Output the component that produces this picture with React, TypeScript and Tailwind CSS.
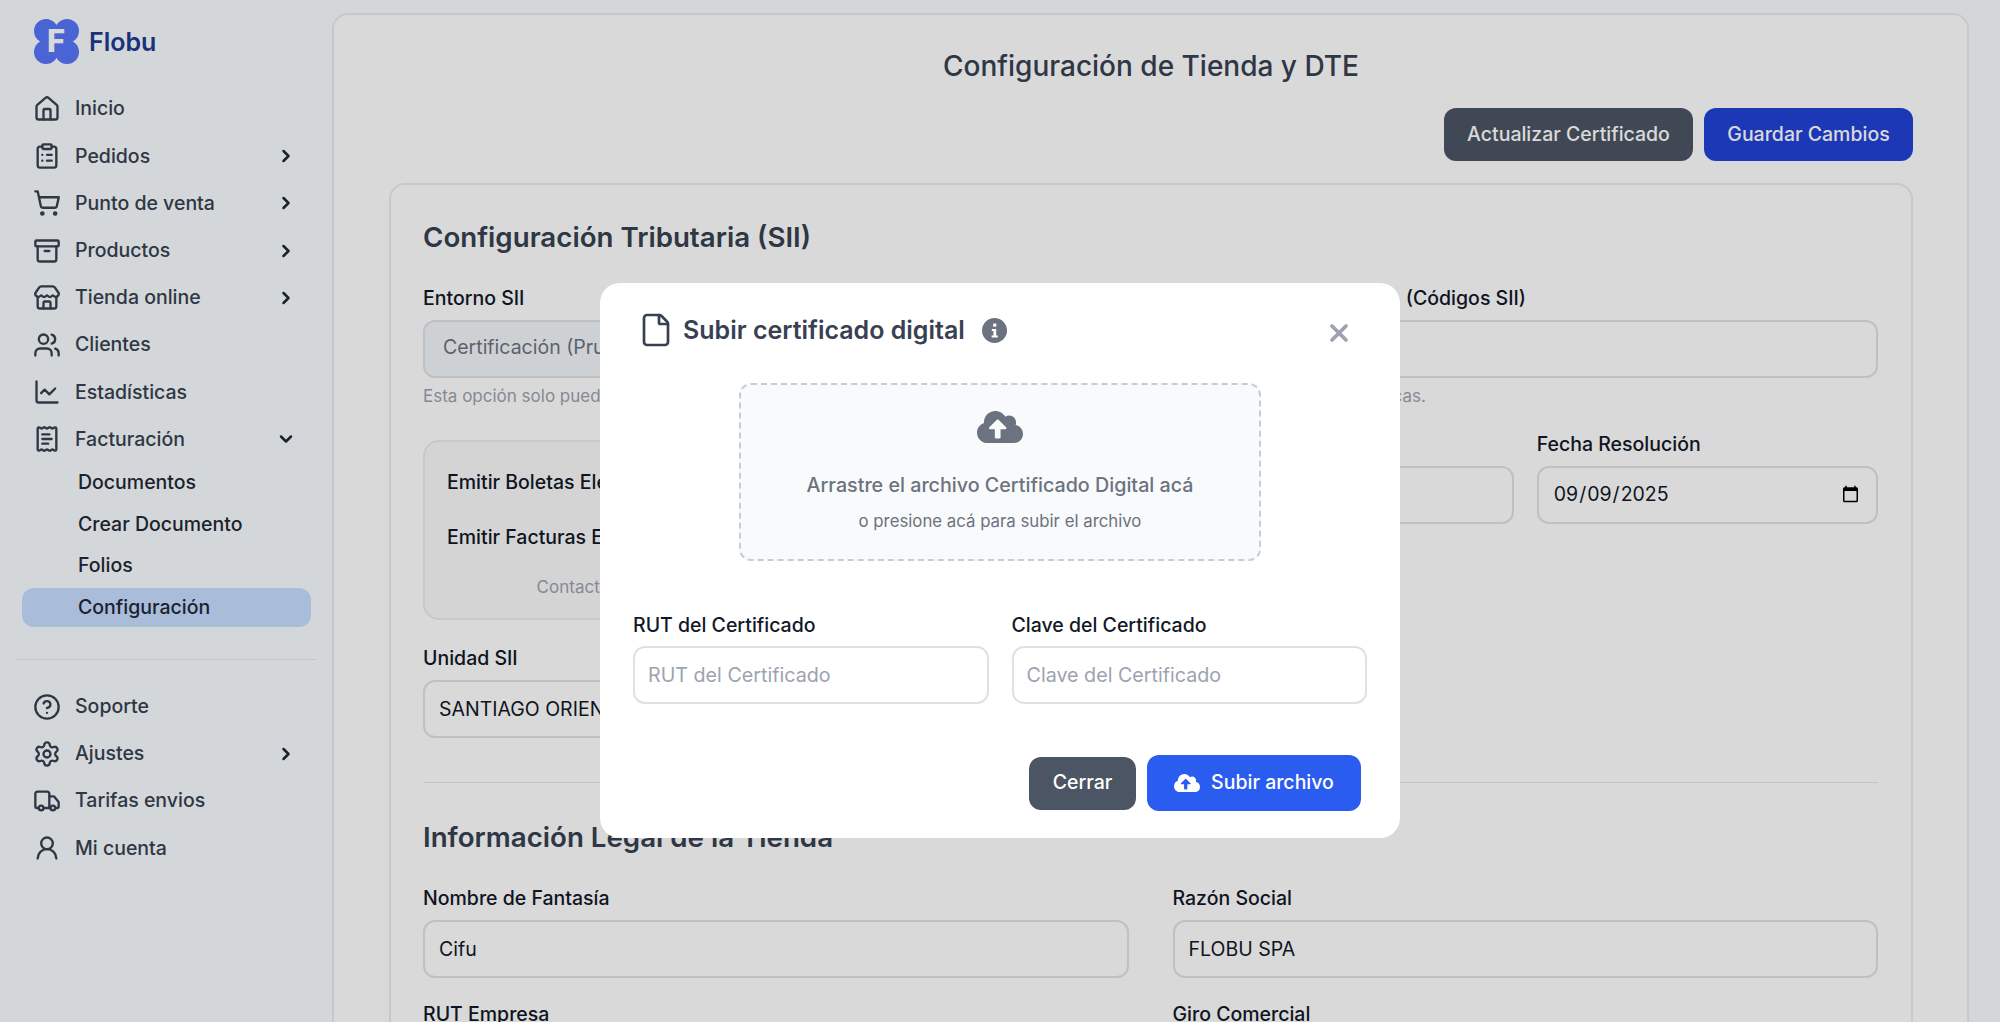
import type { ReactNode } from 'react'
import {
  Archive,
  ChartLine,
  ChevronDown,
  ChevronRight,
  CircleHelp,
  ClipboardList,
  File,
  House,
  ReceiptText,
  Settings,
  ShoppingCart,
  Store,
  Truck,
  UserRound,
  Users,
  X,
} from 'lucide-react'
import { FaCloudUploadAlt } from 'react-icons/fa'

const topNav = [
  { name: 'Inicio', icon: House },
  { name: 'Pedidos', icon: ClipboardList, arrow: true },
  { name: 'Punto de venta', icon: ShoppingCart, arrow: true },
  { name: 'Productos', icon: Archive, arrow: true },
  { name: 'Tienda online', icon: Store, arrow: true },
  { name: 'Clientes', icon: Users },
  { name: 'Estadísticas', icon: ChartLine },
]

const bottomNav = [
  { name: 'Soporte', icon: CircleHelp },
  { name: 'Ajustes', icon: Settings, arrow: true },
  { name: 'Tarifas envios', icon: Truck },
  { name: 'Mi cuenta', icon: UserRound },
]

const billingNav = ['Documentos', 'Crear Documento', 'Folios', 'Configuración']

function Logo() {
  return (
    <svg viewBox="0 0 45 45" className="h-[45px] w-[45px]">
      <g fill="#5775fb">
        <circle cx="12" cy="12" r="12" />
        <circle cx="33" cy="12" r="12" />
        <circle cx="12" cy="33" r="12" />
        <circle cx="33" cy="33" r="12" />
        <rect x="7" y="7" width="31" height="31" />
      </g>
      <text x="22" y="33" textAnchor="middle" fill="#ffffff" fontSize="31" fontWeight="800" fontFamily="Inter, sans-serif">
        F
      </text>
    </svg>
  )
}

function NavRow({ item }: { item: { name: string; icon: typeof House; arrow?: boolean } }) {
  return (
    <div className="flex h-[47.2px] items-center pl-[33px] pr-[36px] text-[#374151]">
      <item.icon className="h-[28px] w-[28px] shrink-0" strokeWidth={2} />
      <span className="ml-[14px] flex-1 text-[19.5px] font-medium">{item.name}</span>
      {item.arrow && <ChevronRight className="h-[20px] w-[20px] text-[#1f2937]" strokeWidth={3} />}
    </div>
  )
}

function Sidebar() {
  return (
    <aside className="w-[332px] shrink-0">
      <div className="flex items-center gap-[10px] pl-[34px] pt-[19px] pb-[21.5px]">
        <Logo />
        <span className="pt-[2px] text-[25px] font-semibold text-[#1f3a93]">Flobu</span>
      </div>
      {topNav.map((item) => (
        <NavRow key={item.name} item={item} />
      ))}
      <div className="flex h-[47.2px] items-center pl-[33px] pr-[36px] text-[#374151]">
        <ReceiptText className="h-[28px] w-[28px] shrink-0" strokeWidth={2} />
        <span className="ml-[14px] flex-1 text-[19.5px] font-medium">Facturación</span>
        <ChevronDown className="h-[20px] w-[20px] text-[#1f2937]" strokeWidth={3} />
      </div>
      <div className="flex flex-col gap-[2.6px] pl-[22px] pr-[21px] pt-[0.3px]">
        {billingNav.map((name) => (
          <div
            key={name}
            className={
              name === 'Configuración'
                ? 'flex h-[39px] items-center rounded-xl bg-[#c7ddff] pl-[56px] text-[19.5px] font-medium text-[#1f2937]'
                : 'flex h-[39px] items-center pl-[56px] text-[19.5px] font-medium text-[#1f2937]'
            }
          >
            {name}
          </div>
        ))}
      </div>
      <div className="mx-[16px] mb-[23px] mt-[32px] h-px bg-[#e5e7eb]" />
      {bottomNav.map((item) => (
        <NavRow key={item.name} item={item} />
      ))}
    </aside>
  )
}

function Field({
  label,
  value,
  muted,
  className,
}: {
  label: ReactNode
  value?: string
  muted?: boolean
  className?: string
}) {
  return (
    <div className={className}>
      <label className="block h-[28px] text-[19.5px] font-medium leading-[28px] text-[#111827]">{label}</label>
      <input
        readOnly
        defaultValue={value}
        className={
          muted
            ? 'mt-[8px] h-[58px] w-full rounded-xl border-2 border-[#e0e2e6] bg-[#f3f6f9] px-[18px] pb-[5px] text-[19.5px] text-[#6b7280] outline-none'
            : 'mt-[8px] h-[58px] w-full rounded-xl border-2 border-[#e0e2e6] px-[14px] text-[19.5px] text-[#111827] outline-none'
        }
      />
    </div>
  )
}

function MainPanel() {
  return (
    <main className="mt-[13px] mb-[-200px] mr-[31px] flex-1 rounded-2xl border-2 border-[#eaecef] bg-white pl-[55px] pr-[54px] pt-[33px]">
      <h1 className="text-center text-[28px] font-medium leading-[36px] text-[#374151]">
        Configuración de Tienda y DTE
      </h1>
      <div className="mt-[24px] flex justify-end gap-[11px]">
        <button className="h-[53px] w-[249px] rounded-xl bg-[#4b5563] text-[19.5px] font-medium text-white">
          Actualizar Certificado
        </button>
        <button className="h-[53px] w-[209px] rounded-xl bg-[#2242d8] text-[19.5px] font-medium text-white">
          Guardar Cambios
        </button>
      </div>
      <section className="mt-[22px] rounded-2xl border-2 border-[#eaecef] pl-[32px] pr-[33px] pt-[34px]">
        <h2 className="text-[27.7px] font-semibold leading-[36px] text-[#374151]">Configuración Tributaria (SII)</h2>
        <div className="mt-[29px] grid grid-cols-2 items-start gap-x-[44px]">
          <div>
            <Field label="Entorno SII" value="Certificación (Pruebas)" muted />
            <p className="mt-[6px] text-[17px] leading-[24px] text-[#9ca3af]">
              Esta opción solo puede ser cambiada por soporte.
            </p>
            <div className="mt-[32px] h-[180px] rounded-2xl border-2 border-[#eaecef] bg-[#f9fafb] px-[22px] pt-[26px]">
              <p className="text-[19.5px] font-medium leading-[28px] text-[#111827]">Emitir Boletas Electrónicas</p>
              <p className="mt-[27px] text-[19.5px] font-medium leading-[28px] text-[#111827]">Emitir Facturas Electrónicas</p>
              <p className="mt-[24px] text-center text-[17px] leading-[24px] text-[#9ca3af]">
                Contacta a soporte para habilitar la emisión de documentos
              </p>
            </div>
            <Field label="Unidad SII" value="SANTIAGO ORIENTE" className="mt-[24px]" />
          </div>
          <div>
            <Field
              label={
                <>
                  <span className="tracking-[-0.2px]">Actividades Económicas</span>{' '}
                  <span className="ml-[4px]">(Códigos SII)</span>
                </>
              }
            />
            <p className="mt-[6px] text-[17px] leading-[24px] text-[#9ca3af]">Busca actividades económicas.</p>
            <div className="mt-[22px] grid grid-cols-2 gap-x-[23px]">
              <Field label="Número Resolución" />
              <div>
                <label className="block h-[28px] text-[19.5px] font-medium leading-[28px] text-[#111827]">
                  Fecha Resolución
                </label>
                <input
                  type="date"
                  defaultValue="2025-09-09"
                  className="mt-[8px] h-[58px] w-full rounded-xl border-2 border-[#e0e2e6] px-[14px] text-[19.5px] text-[#111827] outline-none"
                />
              </div>
            </div>
          </div>
        </div>
        <div className="mt-[44px] h-px bg-[#e5e7eb]" />
        <h2 className="mt-[36px] text-[27.7px] font-semibold leading-[36px] text-[#374151]">
          Información Legal de la Tienda
        </h2>
        <div className="mt-[29px] grid grid-cols-2 gap-x-[44px] gap-y-[22px]">
          <Field label="Nombre de Fantasía" value="Cifu" />
          <Field label="Razón Social" value="FLOBU SPA" />
          <Field label="RUT Empresa" />
          <Field label="Giro Comercial" />
        </div>
      </section>
    </main>
  )
}

function InfoDot() {
  return (
    <svg viewBox="0 0 25 25" className="h-[25px] w-[25px]">
      <circle cx="12.5" cy="12.5" r="12.5" fill="#6b7280" />
      <rect x="11" y="5.5" width="3.4" height="3.2" rx="1" fill="#ffffff" />
      <path d="M9.8 11h4.4v6.4h1.6v2H9.6v-2h1.8V13H9.8z" fill="#ffffff" />
    </svg>
  )
}

function UploadModal() {
  return (
    <div className="absolute inset-0 flex items-start justify-center bg-black/15 pt-[283px]">
      <div className="h-[555px] w-[800px] rounded-[20px] bg-white px-[34px] pt-[31px]">
        <div className="flex h-[32px] items-center pl-[4px] pr-[13px]">
          <File className="h-[36px] w-[36px] shrink-0 text-[#374151]" strokeWidth={1.8} />
          <h3 className="ml-[9px] pt-[2px] text-[25px] font-semibold text-[#374151]">Subir certificado digital</h3>
          <span className="ml-[17px]">
            <InfoDot />
          </span>
          <X className="ml-auto mt-[6px] h-[28px] w-[28px] text-[#9ca3af]" strokeWidth={3.2} />
        </div>
        <div className="mx-auto mt-[37px] flex h-[178px] w-[522px] flex-col items-center rounded-xl border-2 border-dashed border-[#c9cdd3] bg-[#f9fafb] pt-[20px]">
          <FaCloudUploadAlt className="h-[44px] w-[46px] text-[#6b7280]" />
          <p className="mt-[22px] text-[19.7px] font-medium leading-[28px] text-[#6b7280]">
            Arrastre el archivo Certificado Digital acá
          </p>
          <p className="mt-[10px] text-[16.8px] leading-[24px] text-[#6b7280]">o presione acá para subir el archivo</p>
        </div>
        <div className="mx-[-1px] mt-[50px] grid grid-cols-2 gap-x-[23px]">
          <div>
            <label className="block h-[28px] text-[19.5px] font-medium leading-[28px] text-[#111827]">
              RUT del Certificado
            </label>
            <input
              placeholder="RUT del Certificado"
              className="mt-[7px] h-[58px] w-full rounded-xl border-2 border-[#dfe1e5] px-[13px] text-[19.7px] outline-none placeholder:text-[#9ca3af]"
            />
          </div>
          <div>
            <label className="block h-[28px] text-[19.5px] font-medium leading-[28px] text-[#111827]">
              Clave del Certificado
            </label>
            <input
              placeholder="Clave del Certificado"
              className="mt-[7px] h-[58px] w-full rounded-xl border-2 border-[#dfe1e5] px-[13px] text-[19.7px] outline-none placeholder:text-[#9ca3af]"
            />
          </div>
        </div>
        <div className="mt-[51px] flex items-center justify-end gap-[11px] pr-[5px]">
          <button className="h-[53px] w-[107px] rounded-xl bg-[#4b5563] text-[19.5px] font-medium text-white">Cerrar</button>
          <button className="flex h-[56px] w-[214px] items-center justify-center gap-[11px] rounded-xl bg-[#2b5cf0] text-[19.5px] font-medium text-white">
            <FaCloudUploadAlt className="h-[26px] w-[26px]" />
            Subir archivo
          </button>
        </div>
      </div>
    </div>
  )
}

export default function App() {
  return (
    <div className="relative flex h-screen overflow-hidden bg-[#f9fdff] font-[Inter,sans-serif]">
      <Sidebar />
      <MainPanel />
      <UploadModal />
    </div>
  )
}
